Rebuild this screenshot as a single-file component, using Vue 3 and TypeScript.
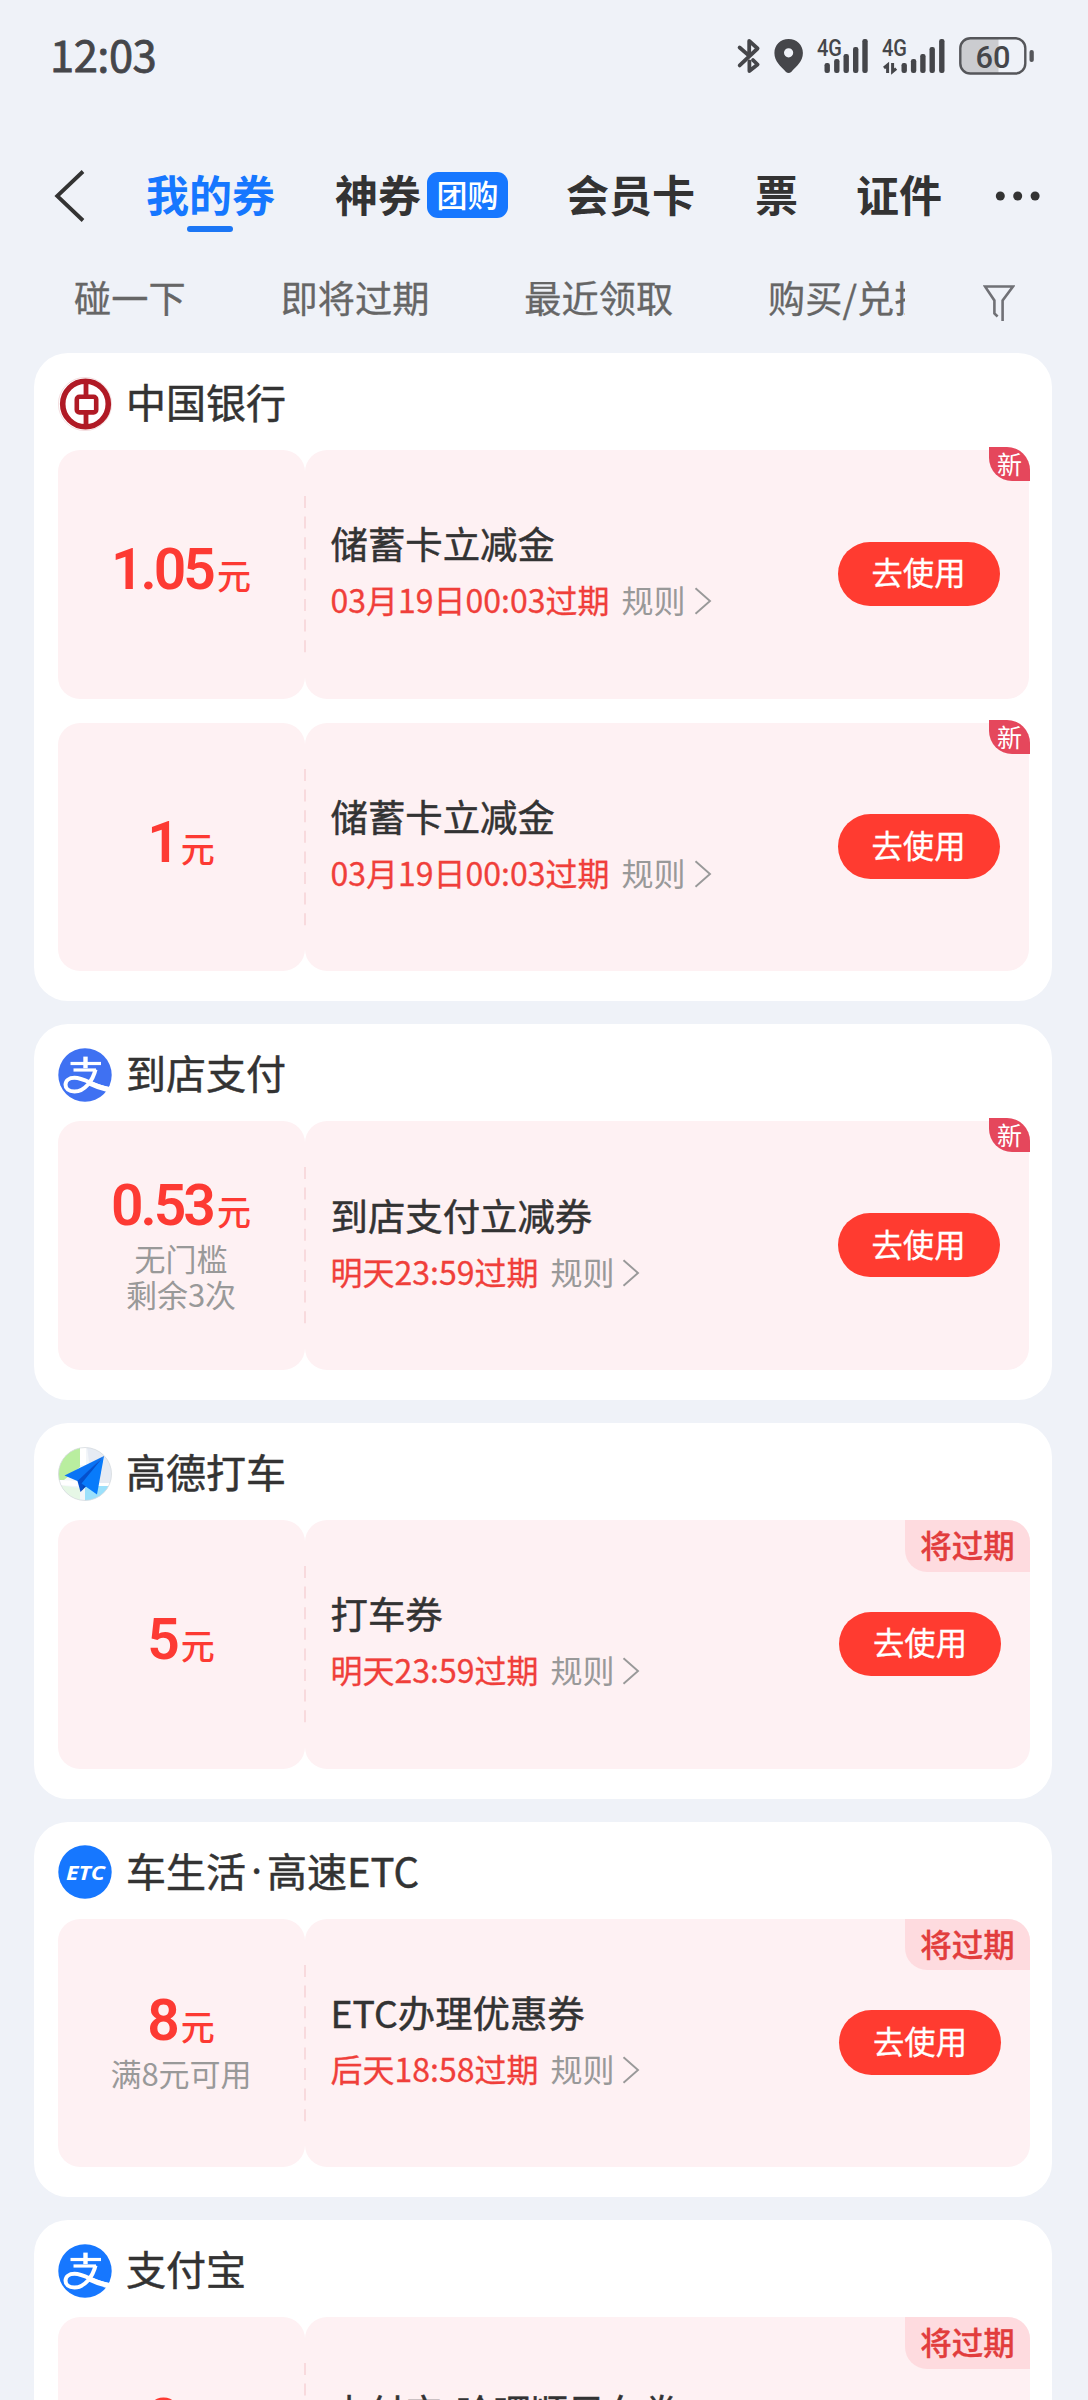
<script setup lang="ts">
type LogoKind = 'boc' | 'alipay' | 'amap' | 'etc'

interface Coupon {
  amount: string
  notes: string[]
  title: string
  expires: string
  tag: 'new' | 'soon'
}

interface Group {
  name: string[]
  logo: LogoKind
  tint?: string
  coupons: Coupon[]
}

const filters: string[] = ['碰一下', '即将过期', '最近领取', '购买/兑换']

const groups: Group[] = [
  {
    name: ['中国银行'],
    logo: 'boc',
    coupons: [
      { amount: '1.05', notes: [], title: '储蓄卡立减金', expires: '03月19日00:03过期', tag: 'new' },
      { amount: '1', notes: [], title: '储蓄卡立减金', expires: '03月19日00:03过期', tag: 'new' },
    ],
  },
  {
    name: ['到店支付'],
    logo: 'alipay',
    tint: '#3f71f2',
    coupons: [
      { amount: '0.53', notes: ['无门槛', '剩余3次'], title: '到店支付立减券', expires: '明天23:59过期', tag: 'new' },
    ],
  },
  {
    name: ['高德打车'],
    logo: 'amap',
    coupons: [{ amount: '5', notes: [], title: '打车券', expires: '明天23:59过期', tag: 'soon' }],
  },
  {
    name: ['车生活', '·', '高速ETC'],
    logo: 'etc',
    coupons: [
      { amount: '8', notes: ['满8元可用'], title: 'ETC办理优惠券', expires: '后天18:58过期', tag: 'soon' },
    ],
  },
  {
    name: ['支付宝'],
    logo: 'alipay',
    tint: '#1677ff',
    coupons: [
      { amount: '8', notes: ['满9元可用'], title: '支付宝-哈啰顺风车券', expires: '后天23:59过期', tag: 'soon' },
    ],
  },
]

const signalTops: number[] = [63, 59, 54, 47, 39]
const signalA: number[] = [827.2, 836.8, 846.2, 855.7, 865]
const signalB: number[] = [904.2, 913.6, 922.9, 932.2, 941.8]
</script>

<template>
  <div class="page">
    <header class="status">
      <span class="clock">12:03</span>
      <svg class="status-icons" viewBox="736 34 300 44" width="300" height="44">
        <g fill="none" stroke="#45464a" stroke-width="3.8" stroke-linejoin="round" stroke-linecap="round">
          <path d="M739.6 47.5l9.6 8.4V40.9l8.4 7.6-17.9 16.9" />
          <path d="M749.4 61.5v9.6l8.2-6.6-4.6-4.4" />
        </g>
        <path
          fill="#45464a"
          fill-rule="evenodd"
          d="M788.6 39c-8.2 0-14.2 6-14.2 14 0 8.400 6.400 13.400 11.600 18.900q2.600 2.300 5.200 0c5.200-5.500 11.700-10.500 11.700-18.900 0-8-6.100-14-14.300-14zm0 9.200a4.600 4.600 0 1 1 0 9.200 4.600 4.600 0 0 1 0-9.200z"
        />
        <text class="net" x="817" y="56" textLength="25" lengthAdjust="spacingAndGlyphs">4G</text>
        <rect
          v-for="(x, i) in signalA"
          :key="'a' + i"
          :x="x - 2.7"
          :y="signalTops[i]"
          width="5.4"
          :height="73 - signalTops[i]"
          rx="2.2"
          fill="#45464a"
        />
        <text class="net" x="882" y="56" textLength="25" lengthAdjust="spacingAndGlyphs">4G</text>
        <path d="M887.6 73V65l-3.600 3M892.600 63v8.600l3.600-3" fill="none" stroke="#45464a" stroke-width="3" />
        <rect
          v-for="(x, i) in signalB"
          :key="'b' + i"
          :x="x - 2.7"
          :y="signalTops[i]"
          width="5.4"
          :height="73 - signalTops[i]"
          rx="2.2"
          fill="#45464a"
        />
        <path d="M998.5 38H970a9.500 9.500 0 0 0-9.500 9.500v16.500a9.500 9.500 0 0 0 9.500 9.500h28.500z" fill="#cbccd0" />
        <rect x="960.3" y="38.2" width="65" height="35.300" rx="10" fill="none" stroke="#55565a" stroke-width="2.400" />
        <rect x="1029.500" y="50" width="4.300" height="12" rx="2.100" fill="#55565a" />
        <text class="battery" x="975.500" y="67.700" textLength="35" lengthAdjust="spacingAndGlyphs">60</text>
      </svg>
    </header>

    <nav class="nav">
      <svg class="back" viewBox="0 0 31 52" width="31" height="52">
        <path d="M29 1.500L3.200 26 29 50.500" fill="none" stroke="#333" stroke-width="3.800" />
      </svg>
      <span class="tab active">我的券</span>
      <span class="tab deals">神券<em class="pill">团购</em></span>
      <span class="tab member">会员卡</span>
      <span class="tab ticket">票</span>
      <span class="tab ident">证件</span>
      <svg class="more" viewBox="0 0 46 10" width="46" height="10">
        <circle cx="5.300" cy="5" r="4.500" fill="#333" />
        <circle cx="22.700" cy="5" r="4.500" fill="#333" />
        <circle cx="40.100" cy="5" r="4.500" fill="#333" />
      </svg>
    </nav>

    <div class="filters">
      <div class="filter-list">
        <span v-for="f in filters" :key="f" class="filter">{{ f }}</span>
      </div>
      <svg class="funnel" viewBox="0 0 32 40" width="32" height="40">
        <path
          d="M14.600 34.500l-3.200-3V18.500L2 4.500h28L19.600 18.500V39"
          fill="none"
          stroke="#707176"
          stroke-width="2.600"
        />
      </svg>
    </div>

    <main class="list">
      <section v-for="g in groups" :key="g.name[0]" class="card">
        <div class="card-head">
          <svg v-if="g.logo === 'boc'" class="logo" viewBox="0 0 54 54">
            <circle cx="27" cy="27" r="26.600" fill="#fff" stroke="#f0d6d8" stroke-width=".8" />
            <circle cx="27.500" cy="27" r="22.800" fill="none" stroke="#b01a25" stroke-width="5.600" />
            <path d="M28 4v14M28 37v14" stroke="#b01a25" stroke-width="4.800" />
            <rect x="18.800" y="19.800" width="19.400" height="15.600" rx="2.600" fill="none" stroke="#b01a25" stroke-width="4.600" />
          </svg>
          <svg v-else-if="g.logo === 'alipay'" class="logo" viewBox="0 0 54 54">
            <circle cx="27" cy="27" r="26.700" :fill="g.tint" />
            <g fill="none" stroke="#fff">
              <path d="M27.500 8.600v11.600" stroke-width="4.400" />
              <path d="M12.500 15.500h30.500" stroke-width="3.200" />
              <path d="M15.500 22h22.500" stroke-width="3.200" />
              <path
                d="M37.500 21.500C35 32 27 43.500 16.500 43.500c-6 0-9-3-9-6.700 0-4 3.500-7 9-7 10.500 0 19 8.700 34 11"
                stroke-width="4"
              />
              <path d="M30 34.500c6 3 13 5.500 20.500 7.200" stroke-width="5" />
            </g>
          </svg>
          <svg v-else-if="g.logo === 'amap'" class="logo" viewBox="0 0 54 54">
            <clipPath id="amap-disc"><circle cx="27" cy="27" r="26.500" /></clipPath>
            <g clip-path="url(#amap-disc)">
              <rect width="54" height="54" fill="#f2f6f9" />
              <path d="M0 0h22v20L6 33H0z" fill="#b9ee9f" />
              <path d="M22 0h6v18h-6zM0 33l54 3v5L0 38z" fill="#fff" />
              <path d="M29 0h25v36H34z" fill="#e6ebf3" />
              <path d="M27 54V39h27v15z" fill="#9be0fb" />
              <path d="M0 38l22 3v13H0z" fill="#e6f7e6" />
            </g>
            <circle cx="27" cy="27" r="26.500" fill="none" stroke="#d5dade" stroke-width=".8" />
            <path d="M46 9L6.500 28.500l14 6z" fill="#0a74f5" />
            <path d="M46 9L19.500 34l3 11z" fill="#0550cc" />
            <path d="M30 30L22.500 45l6-6z" fill="#0348b8" />
            <path d="M46 9L23.500 36.500 39 47.500z" fill="#087bfb" />
          </svg>
          <svg v-else class="logo" viewBox="0 0 54 54">
            <circle cx="27" cy="27" r="26.700" fill="#1677ff" />
            <text class="etc" x="8" y="34.500" textLength="39" lengthAdjust="spacingAndGlyphs">ETC</text>
          </svg>
          <h2 class="card-name">
            <span v-for="part in g.name" :key="part" :class="{ dot: part === '·' }">{{ part }}</span>
          </h2>
        </div>

        <article v-for="(c, i) in g.coupons" :key="i" class="coupon" :class="c.tag">
          <div class="value">
            <div class="price"><b>{{ c.amount }}</b><span>元</span></div>
            <div v-for="n in c.notes" :key="n" class="note">{{ n }}</div>
          </div>
          <svg class="perforation" viewBox="0 0 2 157" width="2" height="157">
            <path d="M1 0v157" stroke="#f8dadd" stroke-width="2" stroke-dasharray="12 8.600" />
          </svg>
          <div class="detail">
            <div class="info">
              <h3 class="title">{{ c.title }}</h3>
              <div class="meta">
                <span class="expires">{{ c.expires }}</span>
                <span class="rules">规则</span>
                <svg class="chevron" viewBox="0 0 18 28" width="18" height="28">
                  <path d="M1.500 1.200L16 14 1.500 26.800" fill="none" stroke="#999" stroke-width="1.900" />
                </svg>
              </div>
            </div>
            <button class="use">去使用</button>
          </div>
          <span class="tag">{{ c.tag === 'new' ? '新' : '将过期' }}</span>
        </article>
      </section>
    </main>
  </div>
</template>

<style>
body {
  margin: 0;
  background: #eff2f8;
}
</style>

<style scoped>
.page {
  display: flex;
  flex-direction: column;
  width: 1088px;
  height: 2400px;
  overflow: hidden;
  background: #eff2f8;
  color: #333;
  font-family: 'Noto Sans CJK SC', 'Noto Sans', sans-serif;
}

svg {
  display: block;
  flex: none;
}

.status {
  display: flex;
  flex: none;
  align-items: center;
  justify-content: space-between;
  height: 44px;
  padding: 34px 52px 0 50px;
}

.clock {
  padding-bottom: 4px;
  color: #45464a;
  font-size: 43.500px;
  line-height: 40px;
  letter-spacing: -0.5px;
  -webkit-text-stroke: 0.8px #45464a;
}

.net {
  font: 500 23px Roboto, sans-serif;
  fill: #45464a;
}

.battery {
  font: 500 32px Roboto, sans-serif;
  fill: #45464a;
}

.nav {
  display: flex;
  flex: none;
  align-items: center;
  height: 60px;
  margin-top: 88px;
  padding-left: 54px;
}

.tab {
  flex: none;
  padding-bottom: 6px;
  font-size: 43px;
  font-weight: 700;
  line-height: 54px;
  white-space: nowrap;
}

.active {
  position: relative;
  margin-left: 61px;
  color: #1677ff;
}

.active::after {
  position: absolute;
  bottom: -6px;
  left: 41px;
  width: 46px;
  height: 6px;
  border-radius: 3px;
  background: #1b76f5;
  content: '';
}

.deals {
  display: flex;
  align-items: center;
  margin-left: 60px;
}

.pill {
  box-sizing: border-box;
  width: 81px;
  height: 46px;
  margin: 4px 0 0 6px;
  border-radius: 11px;
  background: #1677ff;
  color: #fff;
  font-size: 31px;
  font-style: normal;
  font-weight: 500;
  line-height: 43px;
  text-align: center;
}

.member {
  margin-left: 58px;
}

.ticket {
  margin-left: 60px;
}

.ident {
  margin-left: 58px;
}

.more {
  margin-left: 53px;
}

.filters {
  display: flex;
  flex: none;
  align-items: center;
  height: 60px;
  margin-top: 39px;
  padding-left: 74px;
}

.filter-list {
  display: flex;
  flex: none;
  gap: 95px;
  width: 831px;
  padding-top: 3px;
  overflow: hidden;
}

.filter {
  flex: none;
  color: #666;
  font-size: 37.200px;
  line-height: 54px;
  white-space: nowrap;
  -webkit-text-stroke: 0.3px #666;
}

.funnel {
  margin: 13px 0 0 78px;
}

.list {
  display: flex;
  flex: none;
  flex-direction: column;
  gap: 23px;
  width: 1018px;
  margin: 28px 0 0 34px;
}

.card {
  box-sizing: border-box;
  display: flex;
  flex-direction: column;
  padding: 23.500px 23.500px 6px;
  border-radius: 34px;
  background: #fff;
}

.card-head {
  display: flex;
  align-items: center;
  height: 54px;
  margin-bottom: 19.500px;
}

.logo {
  width: 54px;
  height: 54px;
}

.etc {
  font: italic 700 20px 'Open Sans', sans-serif;
  fill: #fff;
}

.card-name {
  display: flex;
  margin: 0 0 5px 14.500px;
  font-size: 40px;
  font-weight: 400;
  line-height: 50px;
  white-space: nowrap;
  -webkit-text-stroke: 0.5px #333;
}

.dot {
  width: 21px;
  font-family: 'Noto Sans', sans-serif;
  text-align: center;
}

.coupon {
  position: relative;
  display: flex;
  align-items: center;
  height: 248.700px;
  margin-bottom: 24px;
}

.coupon.soon {
  margin-right: -1.500px;
}

.value,
.detail {
  box-sizing: border-box;
  height: 100%;
  border-radius: 22px;
  background: #fef1f3;
}

.value {
  display: flex;
  flex: none;
  flex-direction: column;
  align-items: center;
  justify-content: center;
  width: 247px;
}

.price {
  box-sizing: border-box;
  display: flex;
  align-items: baseline;
  height: 62px;
  color: #fd3a33;
  line-height: 53px;
  white-space: nowrap;
}

.price b {
  font-family: Roboto, sans-serif;
  font-size: 57px;
  font-weight: 600;
  letter-spacing: -3px;
}

.price span {
  margin-left: 4px;
  font-size: 34px;
  font-weight: 500;
}

.note {
  color: #999;
  font-size: 31px;
  line-height: 33px;
  padding-bottom: 3px;
  white-space: nowrap;
}

.perforation {
  z-index: 1;
  margin: 0 -1px;
}

.detail {
  display: flex;
  flex: 1;
  align-items: center;
  justify-content: space-between;
  padding: 0 29px 0 26px;
}

.info {
  margin-top: -6px;
}

.title {
  margin: 0;
  font-size: 37.400px;
  font-weight: 400;
  line-height: 56px;
  white-space: nowrap;
  -webkit-text-stroke: 0.5px #333;
}

.meta {
  display: flex;
  align-items: center;
  height: 56px;
  font-size: 32px;
  line-height: 48px;
  white-space: nowrap;
}

.expires {
  color: #f03f3a;
  -webkit-text-stroke: 0.3px #f03f3a;
}

.rules {
  margin-left: 12px;
  color: #999;
}

.chevron {
  margin: 4px 0 0 8px;
}

.use {
  flex: none;
  width: 162px;
  height: 64.500px;
  margin-top: -1px;
  padding: 0 0 3px;
  border: 0;
  border-radius: 33px;
  background: #ff3b30;
  color: #fff;
  font-family: inherit;
  font-size: 31.300px;
  line-height: 60px;
  -webkit-text-stroke: 0.3px #fff;
}

.tag {
  position: absolute;
  box-sizing: border-box;
  text-align: center;
  white-space: nowrap;
}

.new .tag {
  top: -3px;
  right: -1.500px;
  width: 41px;
  height: 34px;
  border-radius: 0 23px 0 23px;
  background: #e5475c;
  color: #fff;
  font-size: 25px;
  line-height: 32px;
}

.soon .tag {
  top: 0;
  right: 0;
  width: 125px;
  height: 51.500px;
  border-radius: 0 22px 0 22px;
  background: #fedbdf;
  color: #e23d3d;
  font-size: 31.500px;
  font-weight: 500;
  line-height: 48px;
  -webkit-text-stroke: 0.3px #e23d3d;
}
</style>
